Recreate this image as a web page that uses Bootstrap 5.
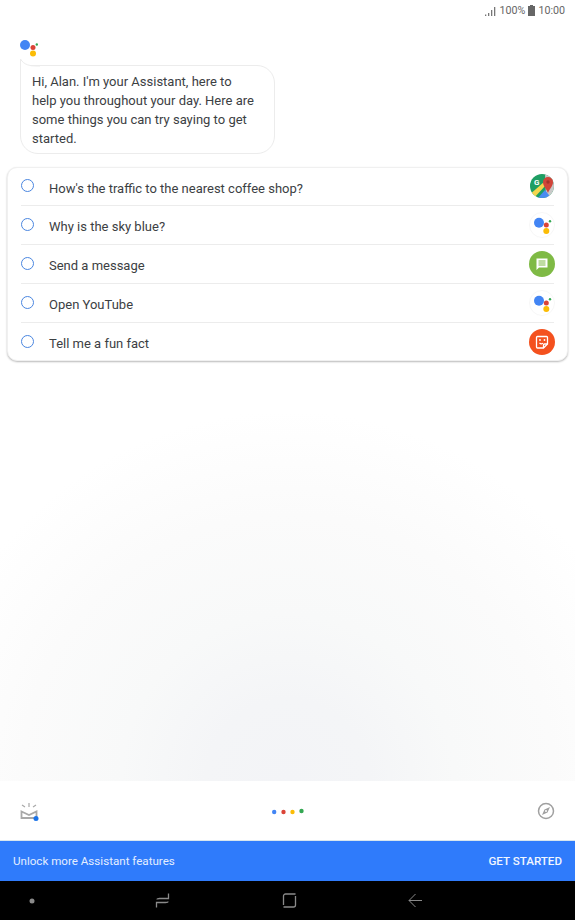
<!DOCTYPE html>
<html lang="en">

<head>
  <meta charset="UTF-8">
  <meta name="viewport" content="width=device-width, initial-scale=1.0">
  <title>Assistant</title>
  <link href="https://cdn.jsdelivr.net/npm/bootstrap@5.3.0/dist/css/bootstrap.min.css" rel="stylesheet">
  <style>
    body {
      font-family: Roboto, "Liberation Sans", sans-serif;
      font-size: 13px;
      color: #3c4043;
      background: #fff;
    }

    .app-screen {
      width: 575px;
      height: 920px;
      overflow: hidden;
    }

    .status-row {
      height: 20px;
      padding: 1px 10px 0 0;
      font-size: 10.7px;
      line-height: 14px;
      color: #666;
      gap: 3px;
    }

    .chat-area {
      min-height: 0;
      background: radial-gradient(circle 370px at 50% 100%, #f3f4f7 0, #f4f5f7 22%, #f8f9f9 45%, #fbfbfb 72%, #fff 100%);
    }

    .chat-logo {
      margin: 20px 0 0 20px;
      display: block;
    }

    .speech-bubble {
      width: 255px;
      height: 89px;
      margin: 7px 0 12.5px 20px;
      padding: 6px 17px 6px 11px;
      line-height: 19px;
      background: #fff;
      border: 1px solid #ececec;
      border-radius: 0 18px 18px 18px;
    }

    .bubble-tail {
      left: -1px;
      top: -7px;
    }

    .suggest-card {
      margin: 0 7px;
      border-radius: 10px;
      background: #fff;
      border: 1px solid #f0f0f0;
      box-shadow: 0 1px 2px rgba(0, 0, 0, .28);
      padding: 0 13px;
    }

    .suggest-row {
      height: 38.8px;
      border-bottom: 1px solid #ececec;
    }

    .suggest-row:last-child {
      height: 37.8px;
      border-bottom: 0;
    }

    .radio-ring {
      width: 13px;
      height: 13px;
      border: 1.7px solid #4a86e0;
      border-radius: 50%;
      margin: -1px 15px 0 0;
      flex: none;
    }

    .suggest-text {
      padding-top: 4px;
    }

    .suggest-icon {
      flex: none;
      margin-right: -1px;
    }

    .bottom-row {
      height: 59px;
      padding: 0 20px;
      background: #fff;
    }

    .promo-row {
      height: 41px;
      padding: 1px 13px 0;
      font-size: 11.6px;
      color: #e4eeff;
      background: #2f7bfb;
      border-top: 1px solid #d8e6ee;
    }

    .promo-action {
      font-weight: 500;
      color: #f1f6ff;
    }

    .nav-row {
      height: 39px;
      padding-left: 20px;
      background: #000;
    }

    .nav-slot {
      width: 24px;
    }

    .nav-recent {
      margin-left: 106px;
    }

    .nav-home {
      margin-left: 103px;
    }

    .nav-back {
      margin-left: 102px;
    }
  </style>
</head>

<body>
  <div class="app-screen d-flex flex-column">
    <div class="status-row d-flex justify-content-end align-items-center">
      <svg width="12" height="12" viewBox="0 0 12 12" fill="#777">
        <rect x="0" y="9.500" width="1.300" height="1.500"/><rect x="3" y="8" width="1.300" height="3"/><rect x="6" y="5" width="1.300" height="6"/><rect x="9" y="2" width="1.300" height="9"/>
      </svg>
      <span>100%</span>
      <svg width="7" height="11" viewBox="0 0 7 11" fill="#666"><path d="M2 0h3v1h2v10H0V1h2z"/></svg>
      <span>10:00</span>
    </div>

    <div class="chat-area flex-grow-1">
      <svg class="chat-logo" width="20" height="18" viewBox="0 0 20 18">
        <circle cx="5" cy="5" r="5" fill="#4285f4"/><circle cx="13" cy="7.500" r="2.500" fill="#db4437"/><circle cx="13" cy="13.500" r="3" fill="#fbbc05"/><circle cx="16.800" cy="4.500" r="1.200" fill="#34a853"/>
      </svg>
      <div class="speech-bubble position-relative">
        <svg class="bubble-tail position-absolute" width="20" height="9" viewBox="0 0 20 9">
          <path d="M.5 0V9H20V7H17C10 7 4 6 .5 0z" fill="#fff"/>
          <path d="M.5 0V9M.5 0C4 6 10 7 17 7h3" fill="none" stroke="#ececec"/>
        </svg>
        Hi, Alan. I'm your Assistant, here to help you throughout your day. Here are some things you can try saying to get started.
      </div>

      <div class="suggest-card">
        <div class="suggest-row d-flex align-items-center">
          <span class="radio-ring"></span><span class="suggest-text flex-grow-1">How's the traffic to the nearest coffee shop?</span>
          <svg class="suggest-icon" width="26" height="26" viewBox="0 0 26 26">
            <defs><clipPath id="mapClip"><circle cx="13" cy="13" r="12"/></clipPath></defs>
            <g clip-path="url(#mapClip)">
              <rect width="26" height="26" fill="#1e9e63"/>
              <path d="M16 0h10v26H17z" fill="#c9c9c9"/>
              <path d="M8 26l8-9 7 9z" fill="#4a8cf0"/>
              <path d="M0 22L15 9l2 3L4 26H0z" fill="#f4d64e"/>
            </g>
            <path d="M19 4a5 5 0 0 1 5 5c0 4-3 6-5 11-2-5-5-7-5-11a5 5 0 0 1 5-5z" fill="#d0453a"/>
            <circle cx="19" cy="9" r="1.700" fill="#a5332a"/>
            <text x="5" y="12" font-size="8" font-weight="700" fill="#fff" font-family="Roboto, sans-serif">G</text>
          </svg>
        </div>
        <div class="suggest-row d-flex align-items-center">
          <span class="radio-ring"></span><span class="suggest-text flex-grow-1">Why is the sky blue?</span>
          <svg class="suggest-icon" width="26" height="26" viewBox="0 0 26 26">
            <circle cx="13" cy="13" r="12.500" fill="#fff" stroke="#f7f7f7"/>
            <circle cx="10" cy="10.700" r="5" fill="#4285f4"/><circle cx="17.300" cy="13" r="2.500" fill="#db4437"/><circle cx="17.300" cy="19" r="3" fill="#fbbc05"/><circle cx="21" cy="9.300" r="1.200" fill="#34a853"/>
          </svg>
        </div>
        <div class="suggest-row d-flex align-items-center">
          <span class="radio-ring"></span><span class="suggest-text flex-grow-1">Send a message</span>
          <svg class="suggest-icon" width="26" height="26" viewBox="0 0 26 26">
            <circle cx="13" cy="13" r="13" fill="#7fba45"/>
            <path d="M7.500 7.500h11v9H10l-2.500 2.500z" fill="#fff"/>
            <path d="M9.500 10h7M9.500 12h7M9.500 14h7" stroke="#7fba45" stroke-width="1"/>
          </svg>
        </div>
        <div class="suggest-row d-flex align-items-center">
          <span class="radio-ring"></span><span class="suggest-text flex-grow-1">Open YouTube</span>
          <svg class="suggest-icon" width="26" height="26" viewBox="0 0 26 26">
            <circle cx="13" cy="13" r="12.500" fill="#fff" stroke="#f7f7f7"/>
            <circle cx="10" cy="10.700" r="5" fill="#4285f4"/><circle cx="17.300" cy="13" r="2.500" fill="#db4437"/><circle cx="17.300" cy="19" r="3" fill="#fbbc05"/><circle cx="21" cy="9.300" r="1.200" fill="#34a853"/>
          </svg>
        </div>
        <div class="suggest-row d-flex align-items-center">
          <span class="radio-ring"></span><span class="suggest-text flex-grow-1">Tell me a fun fact</span>
          <svg class="suggest-icon" width="26" height="26" viewBox="0 0 26 26">
            <circle cx="13" cy="13" r="13" fill="#f4511e"/>
            <path d="M8.500 7.500h9a1 1 0 0 1 1 1V15l-4 4h-6a1 1 0 0 1-1-1V8.500a1 1 0 0 1 1-1z" fill="none" stroke="#fff" stroke-width="1.300"/>
            <path d="M14.500 19v-3a1 1 0 0 1 1-1h3" fill="none" stroke="#fff" stroke-width="1.300"/>
            <circle cx="11" cy="11" r=".9" fill="#fff"/><circle cx="15.500" cy="11" r=".9" fill="#fff"/>
            <path d="M10.500 14c1 1 2.500 1 3.500 .3" fill="none" stroke="#fff" stroke-width="1.100"/>
          </svg>
        </div>
      </div>
    </div>

    <div class="bottom-row d-flex justify-content-between align-items-center">
      <svg width="20" height="22" viewBox="0 0 20 22">
        <path d="M1.500 11.500L9 15l7.500-3.500V18h-15z" fill="none" stroke="#a8a8a8" stroke-width="1.800"/>
        <path d="M9 3v4M2 5l3 2M16 5l-3 2" stroke="#a8a8a8" stroke-width="1.200"/>
        <circle cx="16" cy="18.500" r="2.500" fill="#1a73e8"/>
      </svg>
      <svg width="36" height="10" viewBox="0 0 36 10">
        <circle cx="3.200" cy="6" r="2.200" fill="#4285f4"/><circle cx="12.500" cy="6" r="2.200" fill="#db4437"/><circle cx="21.500" cy="6" r="2.200" fill="#fbbc05"/><circle cx="30.500" cy="5" r="2.200" fill="#34a853"/>
      </svg>
      <svg width="18" height="18" viewBox="0 0 18 18">
        <circle cx="9" cy="9" r="7.500" fill="none" stroke="#a0a0a0" stroke-width="1.500"/>
        <path d="M13 5l-2.500 5.500L5 13l2.500-5.500z" fill="#a0a0a0"/>
        <circle cx="9" cy="9" r="1" fill="#fff"/>
      </svg>
    </div>

    <div class="promo-row d-flex justify-content-between align-items-center">
      <span>Unlock more Assistant features</span>
      <span class="promo-action">GET STARTED</span>
    </div>

    <div class="nav-row d-flex align-items-center">
      <div class="nav-slot d-flex justify-content-center"><svg width="6" height="6"><circle cx="3" cy="3" r="2.500" fill="#8a8a8a"/></svg></div>
      <div class="nav-slot nav-recent d-flex justify-content-center"><svg width="15" height="15" viewBox="0 0 15 15" fill="none" stroke="#8a8a8a" stroke-width="1.300"><path d="M13.500 .5V5.500H4.500Q2 5.500 2 6.500M1.500 14.500V9.500H10.500Q13 9.500 13 8.500"/></svg></div>
      <div class="nav-slot nav-home d-flex justify-content-center"><svg width="15" height="15" viewBox="0 0 15 15" fill="none" stroke="#8a8a8a" stroke-width="1.300"><path d="M13.500 1H3.500A2 2 0 0 0 1.500 3V12M1.500 14H11.500A2 2 0 0 0 13.500 12V3"/></svg></div>
      <div class="nav-slot nav-back d-flex justify-content-center"><svg width="15" height="15" viewBox="0 0 15 15" fill="none" stroke="#8a8a8a" stroke-width="1"><path d="M14 7.500H1M7.500 1L1 7.500 7.500 14"/></svg></div>
    </div>
  </div>

  <script src="https://cdn.jsdelivr.net/npm/bootstrap@5.3.0/dist/js/bootstrap.bundle.min.js"></script>
</body>

</html>
